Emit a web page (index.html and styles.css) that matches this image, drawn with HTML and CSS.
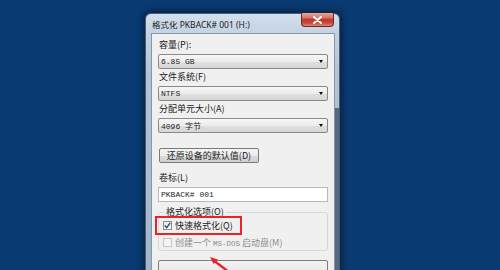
FILE: index.html
```html
<!DOCTYPE html>
<html lang="zh-CN">
<head>
<meta charset="utf-8">
<title>格式化</title>
<link rel="stylesheet" href="styles.css">
</head>
<body>
<div class="desktop">
  <div class="window">
    <div class="titlebar">
      <span class="title">格式化 PKBACK# 001 (H:)</span>
      <div class="close">
        <svg width="9" height="8" viewBox="0 0 9 8"><path d="M1 1 L8 7 M8 1 L1 7" stroke="#fff" stroke-width="2" stroke-linecap="round"/></svg>
      </div>
    </div>
    <div class="client">
      <div class="lbl first">容量(P):</div>
      <div class="combo"><span class="val">6.85 GB</span><span class="arrow"></span></div>
      <div class="lbl">文件系统(F)</div>
      <div class="combo"><span class="val">NTFS</span><span class="arrow"></span></div>
      <div class="lbl">分配单元大小(A)</div>
      <div class="combo"><span class="val">4096 字节</span><span class="arrow"></span></div>
      <div class="btn restore">还原设备的默认值(D)</div>
      <div class="lbl vol">卷标(L)</div>
      <div class="input"><span class="val">PKBACK# 001</span></div>
      <fieldset class="group">
        <legend class="legend">格式化选项(O)</legend>
        <div class="check"><span class="box checked"><svg width="7" height="7" viewBox="0 0 7 7"><path d="M0.8 3.6 L2.7 5.6 L6.2 0.9" fill="none" stroke="#2b4a8a" stroke-width="1.4"/></svg></span><span>快速格式化(Q)</span></div>
        <div class="check disabled"><span class="box"></span><span>创建一个 <span class="mono">MS-DOS</span> 启动盘(M)</span></div>
      </fieldset>
      <div class="btn start"></div>
    </div>
  </div>
  <div class="highlight"></div>
  <svg class="pointer" width="30" height="20" viewBox="0 0 30 20">
    <path d="M21 17 L5 5" stroke="#e5262c" stroke-width="2.4"/>
    <path d="M2 2 L10 4.5 L5.5 9 Z" fill="#e5262c"/>
  </svg>
</div>
</body>
</html>
```
FILE: styles.css
```css
* { box-sizing: border-box; }
html, body {
  margin: 0;
  padding: 0;
  width: 500px;
  height: 270px;
  overflow: hidden;
  background: #0a3a72;
}
.desktop {
  position: relative;
  width: 500px;
  height: 270px;
  padding: 13px 0 0 145px;
  overflow: hidden;
}
.window {
  width: 195px;
  height: 300px;
  border: 1px solid #4b5d73;
  border-radius: 6px 6px 0 0;
  background:
    linear-gradient(to bottom, transparent 94px, #56697f 94px) right top / 5px 100% no-repeat,
    linear-gradient(to bottom, #d3dfec 0, #c3d2e2 20px, #b3c4d7 60px, #9fb1c6 100%);
  box-shadow: 0 0 7px 2px rgba(0, 0, 0, 0.45);
  padding: 0 4px 0 5px;
}
.titlebar {
  height: 19px;
  display: flex;
  align-items: center;
  justify-content: space-between;
}
.title {
  font-family: "Noto Sans", "Noto Sans CJK SC", sans-serif;
  font-size: 8.5px;
  color: #1b1b1b;
  padding-left: 1px;
  padding-top: 1px;
}
.close {
  align-self: flex-start;
  width: 33px;
  height: 14px;
  margin-top: -1px;
  margin-right: 1px;
  border: 1px solid #6b2b25;
  border-top: none;
  border-radius: 0 0 4px 4px;
  background: linear-gradient(to bottom, #eaa597 0, #d8766a 35%, #c2392c 50%, #c8463a 75%, #df8a7a 100%);
  display: flex;
  align-items: center;
  justify-content: center;
}
.client {
  background: #f0f0f0;
  border: 1px solid #8496ab;
  height: 280px;
  padding: 0 6px;
  display: flex;
  flex-direction: column;
  font-family: "Noto Sans CJK SC", sans-serif;
  font-size: 9px;
  color: #1a1a1a;
}
.lbl {
  height: 14px;
  line-height: 14px;
  padding-left: 1px;
  margin-top: 1px;
}
.lbl.first { margin-top: 4px; }
.lbl.vol { margin-top: 8px; }
.combo {
  margin-top: 2px;
  height: 15px;
  border: 1px solid #8a8a8a;
  border-radius: 2px;
  background: linear-gradient(to bottom, #f6f6f6 0, #ececec 50%, #e0e0e0 51%, #d6d6d6 100%);
  display: flex;
  align-items: center;
  justify-content: space-between;
  padding: 0 4px 0 2px;
}
.val {
  font-family: "Liberation Mono", "Noto Sans CJK SC", monospace;
  font-size: 8px;
  color: #1e1e1e;
}
.arrow {
  width: 0;
  height: 0;
  border-left: 2.5px solid transparent;
  border-right: 2.5px solid transparent;
  border-top: 3px solid #111;
}
.btn {
  border: 1px solid #7a7a7a;
  border-radius: 2px;
  background: linear-gradient(to bottom, #f4f4f4 0, #eaeaea 50%, #dcdcdc 51%, #d0d0d0 100%);
  display: flex;
  align-items: center;
  justify-content: center;
}
.restore {
  margin-top: 15px;
  width: 100px;
  height: 15px;
  margin-left: 1px;
}
.input {
  margin-top: 2px;
  height: 15px;
  border: 1px solid #b5b8bf;
  background: #fff;
  display: flex;
  align-items: center;
  padding-left: 2px;
}
.group {
  margin: 4px 0 0 0;
  padding: 0 0 1px 4px;
  border: 1px solid #d3d8dc;
  border-radius: 3px;
  min-width: 0;
}
.legend {
  padding: 0 2px;
  margin-left: 1px;
  line-height: 12px;
  height: 12px;
}
.check {
  height: 14px;
  display: flex;
  align-items: center;
  gap: 3px;
}
.check + .check { margin-top: 3px; }
.box {
  width: 9px;
  height: 9px;
  border: 1px solid #8f8f8f;
  background: linear-gradient(135deg, #e6e6e6, #fbfbfb);
  display: flex;
  align-items: center;
  justify-content: center;
}
.check.disabled { color: #8c8c8c; }
.check.disabled .box { border-color: #c6c6c6; background: #f4f4f4; }
.mono {
  font-family: "Liberation Mono", monospace;
  font-size: 7.5px;
}
.start {
  margin-top: 9px;
  height: 22px;
}
.highlight {
  position: absolute;
  left: 155px;
  top: 216px;
  width: 87px;
  height: 19px;
  border: 2px solid #e8232a;
}
.pointer {
  position: absolute;
  left: 208px;
  top: 255px;
}
```
